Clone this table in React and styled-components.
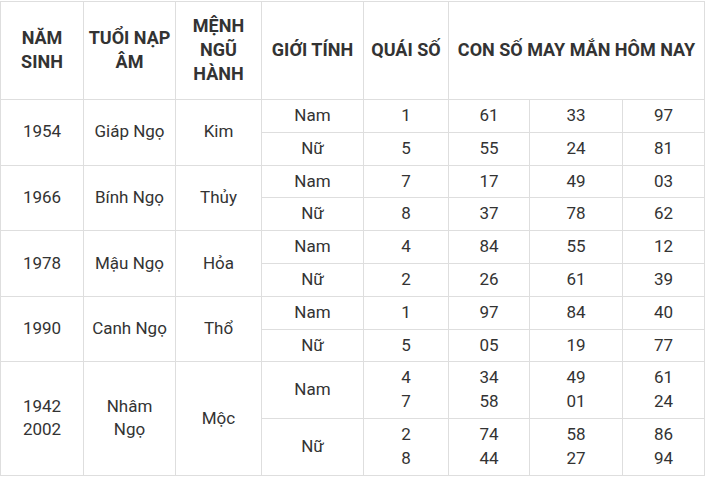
import styled, { createGlobalStyle } from 'styled-components';

const GlobalStyle = createGlobalStyle`
  body {
    margin: 0;
    background: #fff;
    font-family: Roboto, "Liberation Sans", sans-serif;
  }
`;

const widths = [83, 92, 86, 102, 85, 81, 93, 82];

const rows = [
  { year: ['1954'], tuoi: ['Giáp Ngọ'], menh: 'Kim', nam: { q: ['1'], n: [['61'], ['33'], ['97']] }, nu: { q: ['5'], n: [['55'], ['24'], ['81']] } },
  { year: ['1966'], tuoi: ['Bính Ngọ'], menh: 'Thủy', nam: { q: ['7'], n: [['17'], ['49'], ['03']] }, nu: { q: ['8'], n: [['37'], ['78'], ['62']] } },
  { year: ['1978'], tuoi: ['Mậu Ngọ'], menh: 'Hỏa', nam: { q: ['4'], n: [['84'], ['55'], ['12']] }, nu: { q: ['2'], n: [['26'], ['61'], ['39']] } },
  { year: ['1990'], tuoi: ['Canh Ngọ'], menh: 'Thổ', nam: { q: ['1'], n: [['97'], ['84'], ['40']] }, nu: { q: ['5'], n: [['05'], ['19'], ['77']] } },
  {
    year: ['1942', '2002'],
    tuoi: ['Nhâm', 'Ngọ'],
    menh: 'Mộc',
    nam: { q: ['4', '7'], n: [['34', '58'], ['49', '01'], ['61', '24']] },
    nu: { q: ['2', '8'], n: [['74', '44'], ['58', '27'], ['86', '94']] },
  },
];

function Lines({ items }) {
  return items.map((t, i) => (
    <span key={i}>
      {i > 0 && <br />}
      {t}
    </span>
  ));
}

function GenderRow({ label, data, lead }) {
  return (
    <tr>
      {lead}
      <Cell>{label}</Cell>
      <Cell>
        <Lines items={data.q} />
      </Cell>
      {data.n.map((col, i) => (
        <Cell key={i}>
          <Lines items={col} />
        </Cell>
      ))}
    </tr>
  );
}

export default function App() {
  return (
    <>
      <GlobalStyle />
      <Table>
        <colgroup>
          {widths.map((w, i) => (
            <col key={i} style={{ width: w }} />
          ))}
        </colgroup>
        <thead>
          <tr>
            <HeadCell>NĂM SINH</HeadCell>
            <HeadCell>TUỔI NẠP ÂM</HeadCell>
            <HeadCell>MỆNH NGŨ HÀNH</HeadCell>
            <HeadCell>GIỚI TÍNH</HeadCell>
            <HeadCell>QUÁI SỐ</HeadCell>
            <HeadCell colSpan={3}>CON SỐ MAY MẮN HÔM NAY</HeadCell>
          </tr>
        </thead>
        <tbody>
          {rows.map((r) => (
            <Group key={r.year.join('-')} r={r} />
          ))}
        </tbody>
      </Table>
    </>
  );
}

function Group({ r }) {
  const lead = (
    <>
      <Cell rowSpan={2}>
        <Lines items={r.year} />
      </Cell>
      <Cell rowSpan={2}>
        <Lines items={r.tuoi} />
      </Cell>
      <Cell rowSpan={2}>{r.menh}</Cell>
    </>
  );
  return (
    <>
      <GenderRow label="Nam" data={r.nam} lead={lead} />
      <GenderRow label="Nữ" data={r.nu} />
    </>
  );
}

const Table = styled.table`
  width: 704px;
  margin-top: 1px;
  border-collapse: collapse;
  table-layout: fixed;
  color: #333;
  font-size: 17px;
  line-height: 1.4;
`;

const HeadCell = styled.th`
  border: 1px solid #dedede;
  padding: 12px 4px 13px;
  font-size: 18px;
  line-height: 24px;
  font-weight: 700;
  text-align: center;
  vertical-align: middle;
`;

const Cell = styled.td`
  border: 1px solid #dedede;
  padding: 4px 8px;
  text-align: center;
  vertical-align: middle;
  font-weight: 400;
`;
